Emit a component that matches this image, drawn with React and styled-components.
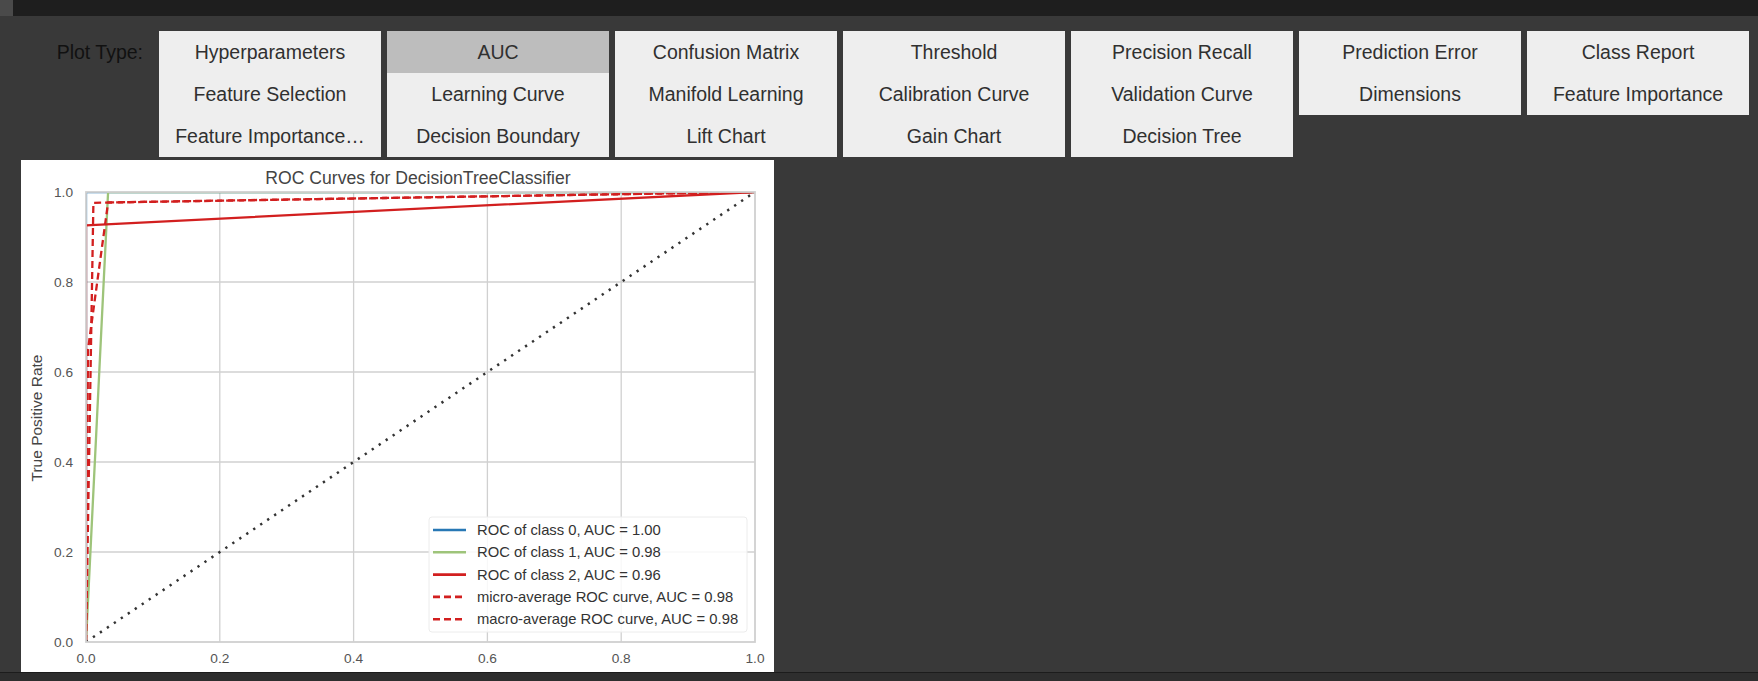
import React from 'react';
import styled, { createGlobalStyle } from 'styled-components';

const GlobalStyle = createGlobalStyle`
  html, body {
    margin: 0;
    padding: 0;
    background: #393939;
    font-family: "Liberation Sans", Arial, sans-serif;
  }
`;

// Whole notebook output area
const Page = styled.div`
  width: 1758px;
  height: 681px;
  display: flex;
  flex-direction: column;
  overflow: hidden;
  background: #393939;
`;

const TopBar = styled.div`
  height: 16px;
  flex: none;
  background: #1e1e1e;
  display: flex;
`;

const ScrollStub = styled.div`
  width: 13px;
  background: #4a4a4a;
`;

const Main = styled.div`
  flex: 1;
  display: flex;
  flex-direction: column;
  padding: 15px 0 0 21px;
`;

const ControlRow = styled.div`
  display: flex;
  align-items: flex-start;
`;

const Label = styled.div`
  width: 138px;
  box-sizing: border-box;
  padding-right: 16px;
  text-align: right;
  height: 42px;
  line-height: 42px;
  font-size: 19.5px;
  color: #111;
`;

const ButtonGrid = styled.div`
  display: grid;
  grid-template-columns: repeat(7, 222px);
  grid-auto-rows: 42px;
  column-gap: 6px;
`;

const ToggleButton = styled.button`
  border: none;
  margin: 0;
  padding: 0 12px;
  font-family: inherit;
  font-size: 19.5px;
  color: #303030;
  background: ${(p) => (p.$active ? '#bdbdbd' : '#eeeeee')};
  white-space: nowrap;
  overflow: hidden;
  text-overflow: ellipsis;
  cursor: pointer;
`;

const PlotFrame = styled.div`
  margin-top: 3px;
  width: 753px;
  height: 512px;
  background: #ffffff;
`;

const BottomBar = styled.div`
  height: 8px;
  flex: none;
  background: #2e2e2e;
  border-top: 1px solid #1c1c1c;
`;

const plotTypes = [
  'Hyperparameters', 'AUC', 'Confusion Matrix', 'Threshold', 'Precision Recall', 'Prediction Error', 'Class Report',
  'Feature Selection', 'Learning Curve', 'Manifold Learning', 'Calibration Curve', 'Validation Curve', 'Dimensions', 'Feature Importance',
  'Feature Importance…', 'Decision Boundary', 'Lift Chart', 'Gain Chart', 'Decision Tree',
];

// axes geometry inside the figure
const AX = { left: 65, top: 32, width: 669, height: 450 };
const fx = (x) => AX.left + AX.width * x;
const fy = (y) => AX.top + AX.height * (1 - y);
const pts = (arr) => arr.map(([x, y]) => `${fx(x).toFixed(1)},${fy(y).toFixed(1)}`).join(' ');

const BLUE = '#2878b5';
const GREEN = '#9ec47a';
const RED = '#d21f1f';

const ticks = [0, 0.2, 0.4, 0.6, 0.8, 1.0];

const legendItems = [
  { color: BLUE, text: 'ROC of class 0, AUC = 1.00' },
  { color: GREEN, text: 'ROC of class 1, AUC = 0.98' },
  { color: RED, text: 'ROC of class 2, AUC = 0.96' },
  { color: RED, text: 'micro-average ROC curve, AUC = 0.98', dashed: true },
  { color: RED, text: 'macro-average ROC curve, AUC = 0.98', dashed: true },
];

const RocChart = () => (
  <svg width="753" height="512" viewBox="0 0 753 512" fontFamily='"Liberation Sans", Arial, sans-serif'>
    <defs>
      <clipPath id="axes-clip">
        <rect x={AX.left} y={AX.top} width={AX.width} height={AX.height} />
      </clipPath>
    </defs>

    {/* grid */}
    {ticks.slice(1, 5).map((t) => (
      <g key={t} stroke="#d0d0d0" strokeWidth="1.3">
        <line x1={fx(t)} y1={AX.top} x2={fx(t)} y2={AX.top + AX.height} />
        <line x1={AX.left} y1={fy(t)} x2={AX.left + AX.width} y2={fy(t)} />
      </g>
    ))}

    {/* curves */}
    <g clipPath="url(#axes-clip)" fill="none" strokeWidth="2.3" strokeLinejoin="round">
      <polyline points={pts([[0, 0], [0, 1], [1, 1]])} stroke={BLUE} />
      <polyline points={pts([[0, 0], [0.033, 1], [1, 1]])} stroke={GREEN} />
      <polyline points={pts([[0, 0], [0, 0.926], [1, 1]])} stroke={RED} />
      <polyline points={pts([[0, 0], [0.011, 0.976], [1, 1]])} stroke={RED} strokeDasharray="7 4" />
      <polyline points={pts([[0, 0], [0.003, 0.65], [0.033, 0.977], [1, 1]])} stroke={RED} strokeDasharray="7 4" />
      <line x1={fx(0)} y1={fy(0)} x2={fx(1)} y2={fy(1)} stroke="#333" strokeWidth="2.5" strokeDasharray="2.3 6.1" />
    </g>

    {/* spines sit above the curves */}
    <rect x={AX.left} y={AX.top} width={AX.width} height={AX.height} fill="none" stroke="#d0d0d0" strokeWidth="1.8" />

    {/* tick labels */}
    {ticks.map((t) => (
      <text key={`y${t}`} x={AX.left - 13} y={fy(t)} textAnchor="end" dominantBaseline="central" fontSize="13.7" fill="#555">
        {t.toFixed(1)}
      </text>
    ))}
    {ticks.map((t) => (
      <text key={`x${t}`} x={fx(t)} y={AX.top + AX.height + 16} textAnchor="middle" dominantBaseline="central" fontSize="13.7" fill="#555">
        {t.toFixed(1)}
      </text>
    ))}

    <text x="397" y="18" textAnchor="middle" dominantBaseline="central" fontSize="17.6" fill="#444">
      ROC Curves for DecisionTreeClassifier
    </text>
    <text transform="translate(15 258) rotate(-90)" textAnchor="middle" dominantBaseline="central" fontSize="15.5" fill="#444">
      True Positive Rate
    </text>

    {/* legend */}
    <rect x="408" y="357" width="318" height="115" rx="3" fill="#fff" fillOpacity="0.85" stroke="#ececec" />
    {legendItems.map((item, i) => {
      const y = 370 + i * 22.3;
      return (
        <g key={item.text}>
          <line x1="412" y1={y} x2="445" y2={y} stroke={item.color} strokeWidth="2.6" strokeDasharray={item.dashed ? '7 4' : undefined} />
          <text x="456" y={y} dominantBaseline="central" fontSize="14.8" fill="#333">
            {item.text}
          </text>
        </g>
      );
    })}
  </svg>
);

const App = () => (
  <>
    <GlobalStyle />
    <Page>
      <TopBar>
        <ScrollStub />
      </TopBar>
      <Main>
        <ControlRow>
          <Label>Plot Type:</Label>
          <ButtonGrid>
            {plotTypes.map((name) => (
              <ToggleButton key={name} $active={name === 'AUC'}>
                {name}
              </ToggleButton>
            ))}
          </ButtonGrid>
        </ControlRow>
        <PlotFrame>
          <RocChart />
        </PlotFrame>
      </Main>
      <BottomBar />
    </Page>
  </>
);

export default App;
